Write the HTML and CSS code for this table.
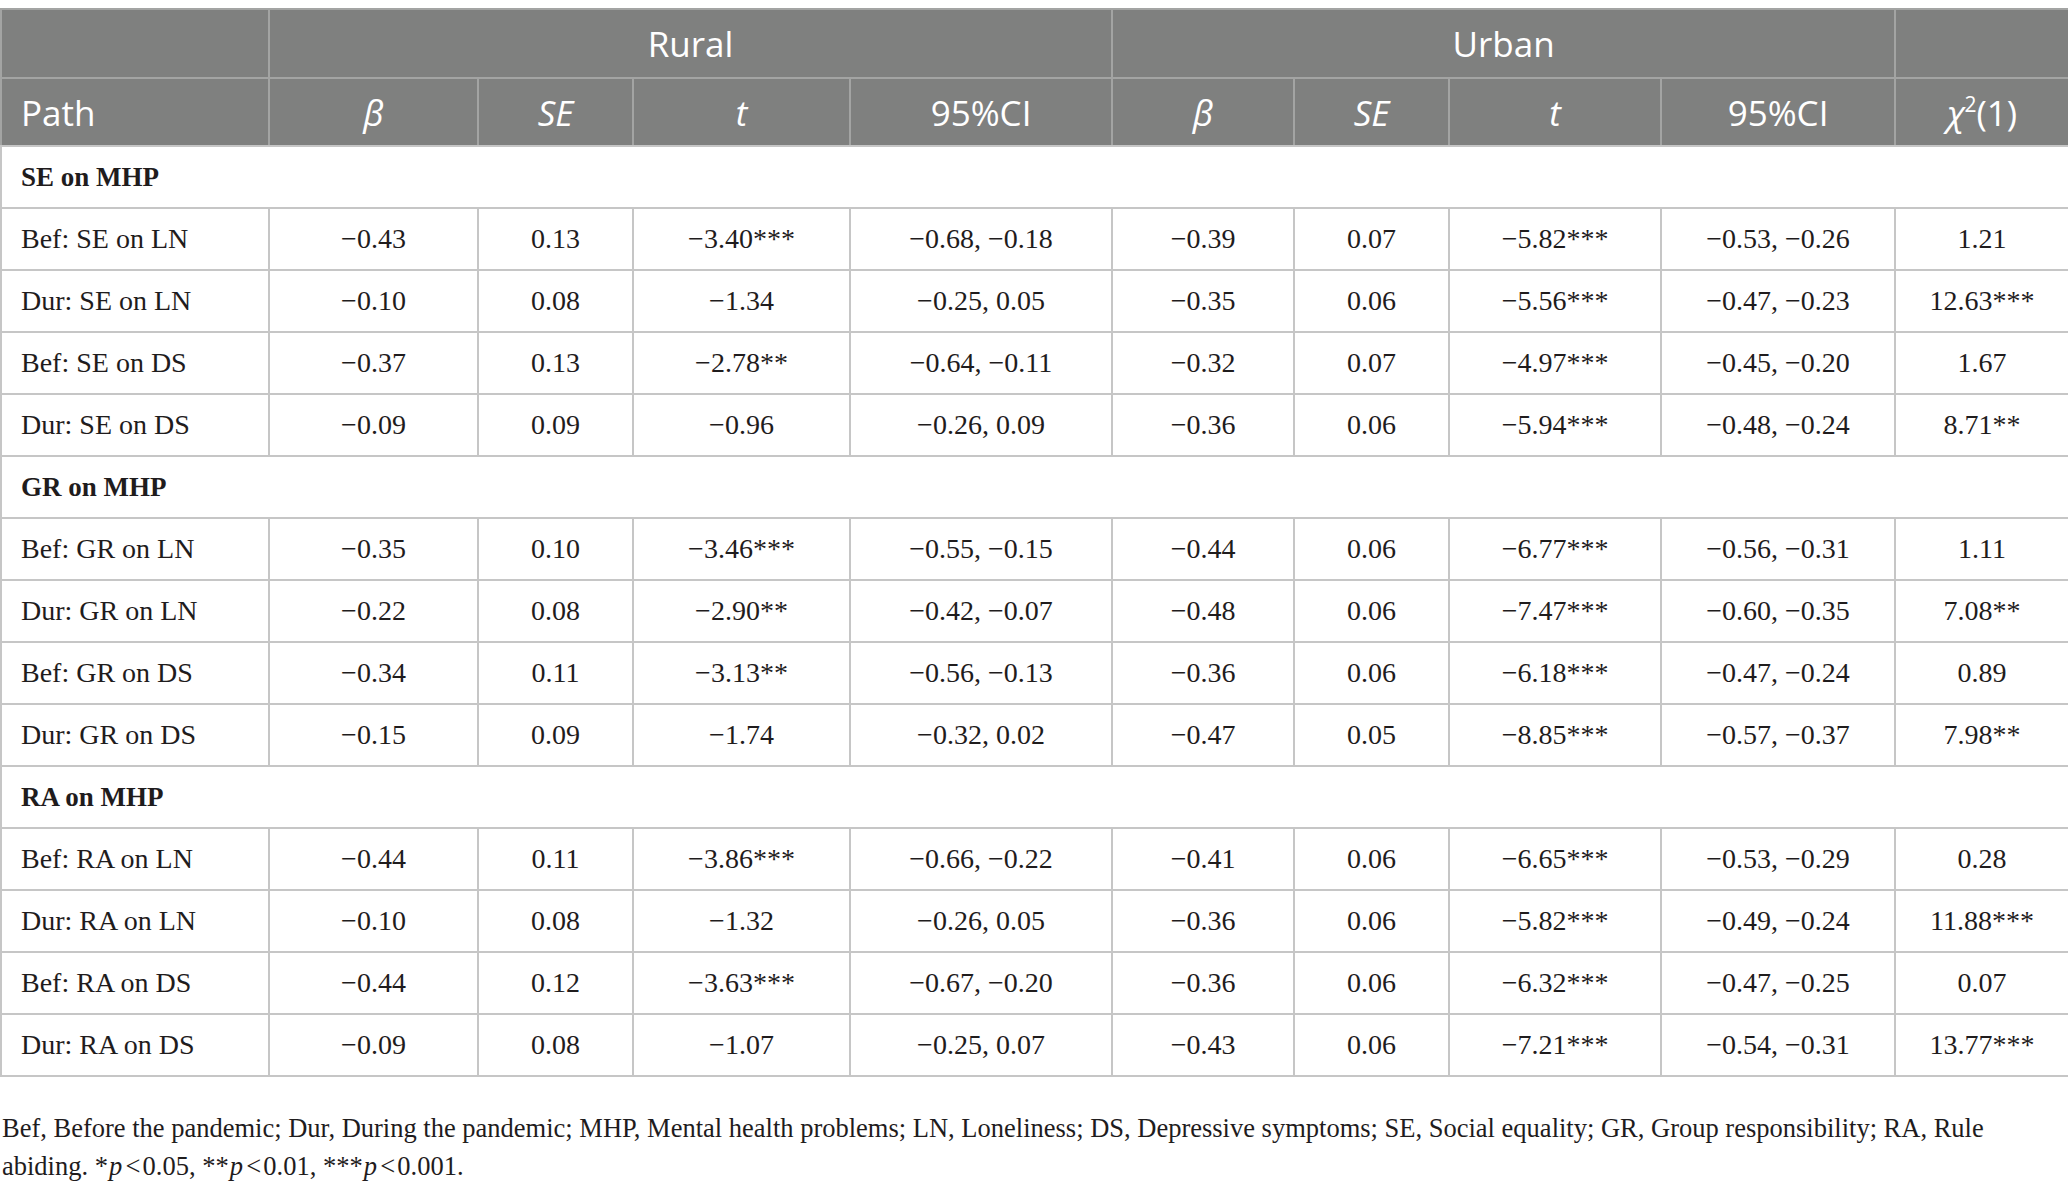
FILE: index.html
```html
<!DOCTYPE html>
<html lang="en">
<head>
<meta charset="utf-8">
<title>Table</title>
<link rel="stylesheet" href="styles.css">
</head>
<body>
<table class="data">
  <colgroup>
    <col class="c-path">
    <col class="c-b1">
    <col class="c-se1">
    <col class="c-t1">
    <col class="c-ci1">
    <col class="c-b2">
    <col class="c-se2">
    <col class="c-t2">
    <col class="c-ci2">
    <col class="c-chi">
  </colgroup>
  <thead>
    <tr class="h1">
      <th></th>
      <th colspan="4">Rural</th>
      <th colspan="4">Urban</th>
      <th></th>
    </tr>
    <tr class="h2">
      <th class="left">Path</th>
      <th><i>β</i></th>
      <th><i>SE</i></th>
      <th><i>t</i></th>
      <th>95%CI</th>
      <th><i>β</i></th>
      <th><i>SE</i></th>
      <th><i>t</i></th>
      <th>95%CI</th>
      <th><i>χ</i><sup>2</sup>(1)</th>
    </tr>
  </thead>
  <tbody>
    <tr class="group"><td colspan="10">SE on MHP</td></tr>
    <tr><td>Bef: SE on LN</td><td>−0.43</td><td>0.13</td><td>−3.40***</td><td>−0.68, −0.18</td><td>−0.39</td><td>0.07</td><td>−5.82***</td><td>−0.53, −0.26</td><td>1.21</td></tr>
    <tr><td>Dur: SE on LN</td><td>−0.10</td><td>0.08</td><td>−1.34</td><td>−0.25, 0.05</td><td>−0.35</td><td>0.06</td><td>−5.56***</td><td>−0.47, −0.23</td><td>12.63***</td></tr>
    <tr><td>Bef: SE on DS</td><td>−0.37</td><td>0.13</td><td>−2.78**</td><td>−0.64, −0.11</td><td>−0.32</td><td>0.07</td><td>−4.97***</td><td>−0.45, −0.20</td><td>1.67</td></tr>
    <tr><td>Dur: SE on DS</td><td>−0.09</td><td>0.09</td><td>−0.96</td><td>−0.26, 0.09</td><td>−0.36</td><td>0.06</td><td>−5.94***</td><td>−0.48, −0.24</td><td>8.71**</td></tr>
    <tr class="group"><td colspan="10">GR on MHP</td></tr>
    <tr><td>Bef: GR on LN</td><td>−0.35</td><td>0.10</td><td>−3.46***</td><td>−0.55, −0.15</td><td>−0.44</td><td>0.06</td><td>−6.77***</td><td>−0.56, −0.31</td><td>1.11</td></tr>
    <tr><td>Dur: GR on LN</td><td>−0.22</td><td>0.08</td><td>−2.90**</td><td>−0.42, −0.07</td><td>−0.48</td><td>0.06</td><td>−7.47***</td><td>−0.60, −0.35</td><td>7.08**</td></tr>
    <tr><td>Bef: GR on DS</td><td>−0.34</td><td>0.11</td><td>−3.13**</td><td>−0.56, −0.13</td><td>−0.36</td><td>0.06</td><td>−6.18***</td><td>−0.47, −0.24</td><td>0.89</td></tr>
    <tr><td>Dur: GR on DS</td><td>−0.15</td><td>0.09</td><td>−1.74</td><td>−0.32, 0.02</td><td>−0.47</td><td>0.05</td><td>−8.85***</td><td>−0.57, −0.37</td><td>7.98**</td></tr>
    <tr class="group"><td colspan="10">RA on MHP</td></tr>
    <tr><td>Bef: RA on LN</td><td>−0.44</td><td>0.11</td><td>−3.86***</td><td>−0.66, −0.22</td><td>−0.41</td><td>0.06</td><td>−6.65***</td><td>−0.53, −0.29</td><td>0.28</td></tr>
    <tr><td>Dur: RA on LN</td><td>−0.10</td><td>0.08</td><td>−1.32</td><td>−0.26, 0.05</td><td>−0.36</td><td>0.06</td><td>−5.82***</td><td>−0.49, −0.24</td><td>11.88***</td></tr>
    <tr><td>Bef: RA on DS</td><td>−0.44</td><td>0.12</td><td>−3.63***</td><td>−0.67, −0.20</td><td>−0.36</td><td>0.06</td><td>−6.32***</td><td>−0.47, −0.25</td><td>0.07</td></tr>
    <tr><td>Dur: RA on DS</td><td>−0.09</td><td>0.08</td><td>−1.07</td><td>−0.25, 0.07</td><td>−0.43</td><td>0.06</td><td>−7.21***</td><td>−0.54, −0.31</td><td>13.77***</td></tr>
  </tbody>
</table>
<p class="note">Bef, Before the pandemic; Dur, During the pandemic; MHP, Mental health problems; LN, Loneliness; DS, Depressive symptoms; SE, Social equality; GR, Group responsibility; RA, Rule abiding. *<i>p</i>&#8202;&lt;&#8202;0.05, **<i>p</i>&#8202;&lt;&#8202;0.01, ***<i>p</i>&#8202;&lt;&#8202;0.001.</p>
</body>
</html>
```

FILE: styles.css
```css
html, body {
  margin: 0;
  padding: 0;
  background: #ffffff;
}

body {
  padding-top: 8px;
  font-family: "Liberation Serif", "Times New Roman", serif;
  color: #1f1c1d;
}

.data {
  width: 2068px;
  table-layout: fixed;
  border-collapse: collapse;
  border: 2px solid #c6c6c6;
}

.c-path { width: 268px; }
.c-b1 { width: 209px; }
.c-se1 { width: 155px; }
.c-t1 { width: 217px; }
.c-ci1 { width: 262px; }
.c-b2 { width: 182px; }
.c-se2 { width: 155px; }
.c-t2 { width: 212px; }
.c-ci2 { width: 234px; }
.c-chi { width: 174px; }

.data th {
  background: #7f807f;
  color: #ffffff;
  font-family: "Open Sans", "Noto Sans", sans-serif;
  font-weight: 400;
  font-size: 35px;
  line-height: 1;
  text-align: center;
  vertical-align: middle;
  padding: 0 19px;
  border: 2px solid #a3a4a3;
}

.data th.left {
  text-align: left;
}

.data th sup {
  font-size: 0.6em;
  vertical-align: 0.65em;
  line-height: 0;
}

.data tr.h1 { height: 69px; }
.data tr.h2 { height: 68px; }

.data thead tr.h2 th {
  border-bottom: 2px solid #c6c6c6;
}

.data td {
  font-size: 28px;
  line-height: 1;
  text-align: center;
  vertical-align: middle;
  padding: 0 8px;
  border: 2px solid #c6c6c6;
  white-space: nowrap;
}

.data td:first-child {
  text-align: left;
  padding-left: 19px;
}

.data tbody tr { height: 62px; }

.data tr.group td {
  font-weight: 700;
  text-align: left;
  padding-left: 19px;
  font-size: 27px;
}

.note {
  width: 2010px;
  margin: 32px 0 0 0;
  padding: 0 2px;
  font-size: 26.5px;
  line-height: 38px;
}

.note i {
  padding: 0 1px;
}
```
